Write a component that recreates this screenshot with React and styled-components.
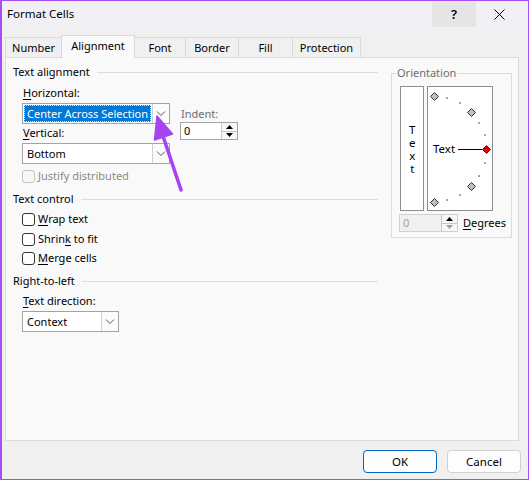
import React from "react";
import styled, { createGlobalStyle } from "styled-components";

const FONT = `"Noto Sans", "Open Sans", sans-serif`;

const GlobalStyle = createGlobalStyle`
  html, body { margin: 0; padding: 0; background: #ffffff; }
  * { box-sizing: border-box; }
`;

const Window = styled.div`
  position: relative;
  width: 529px;
  height: 480px;
  border: 1px solid #a64ef6;
  border-left-width: 2px;
  background: #f0f0f0;
  display: flex;
  flex-direction: column;
  color: #000;
  font-family: ${FONT};
  font-size: 11px;
  overflow: hidden;
`;

const TitleBar = styled.div`
  height: 26px;
  display: flex;
  align-items: center;
  background: #f1f1f5;
`;

const Title = styled.div`
  flex: 1;
  padding-left: 5px;
  padding-bottom: 2px;
  font-size: 11.5px;
`;

const CaptionButton = styled.div`
  width: ${(p) => p.$w}px;
  height: 26px;
  display: flex;
  align-items: center;
  justify-content: center;
  background: ${(p) => (p.$hover ? "#e5e5e5" : "transparent")};
  margin-right: ${(p) => p.$mr || 0}px;
  font-size: 13px;
  font-weight: 600;
`;

const TabStrip = styled.div`
  display: flex;
  align-items: flex-end;
  height: 22px;
  margin-top: 8px;
  padding-left: 3px;
  position: relative;
  z-index: 1;
`;

const Tab = styled.div`
  width: ${(p) => p.$w}px;
  height: ${(p) => (p.$active ? 23 : 20)}px;
  margin-bottom: ${(p) => (p.$active ? -1 : 0)}px;
  margin-left: -1px;
  &:first-child { margin-left: 0; }
  border: 1px solid #d9d9d9;
  border-bottom: none;
  background: ${(p) => (p.$active ? "#f9f9f9" : "#f0f0f0")};
  position: relative;
  z-index: ${(p) => (p.$active ? 2 : 1)};
  display: flex;
  align-items: center;
  justify-content: center;
  padding-bottom: ${(p) => (p.$active ? 3 : 0)}px;
`;

const Panel = styled.div`
  margin: 0 9px 0 3px;
  height: 384px;
  background: #f9f9f9;
  border: 1px solid #dcdcdc;
  display: flex;
  gap: 13px;
  padding: 6px 6px 0 7px;
`;

const LeftColumn = styled.div`
  flex: 0 0 365px;
  display: flex;
  flex-direction: column;
`;

const GroupHeading = styled.div`
  display: flex;
  align-items: center;
  height: 16px;
  line-height: 15px;
  padding-bottom: 1px;
  margin-top: ${(p) => p.$mt || 0}px;
  &::after {
    content: "";
    flex: 1;
    border-top: 1px solid #dcdcdc;
    margin-left: 7px;
    margin-top: 1px;
  }
`;

const Indented = styled.div`
  margin-left: 9px;
  display: flex;
  flex-direction: column;
`;

const Label = styled.div`
  height: 16px;
  line-height: 15px;
  padding-left: 1px;
  margin-top: ${(p) => p.$mt || 0}px;
  color: ${(p) => (p.$disabled ? "#6d6d6d" : "#000")};
  white-space: nowrap;
`;

const Key = styled.span`
  text-decoration: underline;
  text-underline-offset: 2px;
`;

const FieldRow = styled.div`
  display: flex;
  margin-top: 2px;
`;

const FieldColumn = styled.div`
  display: flex;
  flex-direction: column;
  margin-left: ${(p) => p.$ml || 0}px;
  padding-top: ${(p) => p.$pt || 0}px;
`;

const Select = styled.div`
  display: flex;
  width: ${(p) => p.$w}px;
  height: 21px;
  border: 1px solid #a3a3a3;
  background: #fff;
  margin-top: ${(p) => p.$mt || 0}px;
`;

const SelectValue = styled.div`
  flex: 1;
  display: flex;
  padding: 1px;
  min-width: 0;
`;

const SelectText = styled.div`
  flex: 1;
  display: flex;
  align-items: center;
  padding-left: 3px;
  padding-bottom: 1px;
  white-space: nowrap;
  overflow: hidden;
  background: ${(p) => (p.$selected ? "#0078d7" : "transparent")};
  color: ${(p) => (p.$selected ? "#fff" : "#000")};
  outline: ${(p) => (p.$selected ? "1px dotted rgba(255,255,255,0.85)" : "none")};
  outline-offset: -1px;
`;

const DropButton = styled.div`
  width: 17px;
  border-left: 1px solid #cfcfcf;
  background: #fbfbfb;
  display: flex;
  align-items: center;
  justify-content: center;
`;

const Spin = styled.div`
  display: flex;
  width: ${(p) => p.$w}px;
  height: 18px;
  border: 1px solid ${(p) => (p.$disabled ? "#d0d0d0" : "#a3a3a3")};
  background: ${(p) => (p.$disabled ? "#f0f0f0" : "#fff")};
  margin-left: ${(p) => p.$ml || 0}px;
`;

const SpinValue = styled.div`
  flex: 1;
  padding-left: 3px;
  line-height: 15px;
  color: ${(p) => (p.$disabled ? "#a0a0a0" : "#000")};
`;

const SpinButtons = styled.div`
  width: 16px;
  display: flex;
  flex-direction: column;
  border-left: 1px solid #c8c8c8;
  background: #f7f7f7;
`;

const SpinHalf = styled.div`
  flex: 1;
  display: flex;
  align-items: center;
  justify-content: center;
  & + & { border-top: 1px solid #c8c8c8; }
`;

const CheckRow = styled.div`
  display: flex;
  align-items: center;
  height: 16px;
  gap: 3px;
  margin-top: ${(p) => p.$mt || 0}px;
  color: ${(p) => (p.$disabled ? "#8a8a8a" : "#000")};
`;

const CheckLabel = styled.span`
  line-height: 15px;
  padding-bottom: 1px;
`;

const CheckBox = styled.div`
  width: 13px;
  height: 13px;
  border: 1px solid ${(p) => (p.$disabled ? "#c4c4c4" : "#333")};
  border-radius: 3px;
  background: ${(p) => (p.$disabled ? "#f7f7f7" : "#fff")};
`;

const Orientation = styled.fieldset`
  flex: 0 0 121px;
  margin: 1px 0 0 0;
  padding: 0 0 3px 8px;
  border: 1px solid #dcdcdc;
  height: 173px;
  min-width: 0;
`;

const Legend = styled.legend`
  padding: 0 1px;
  margin-left: -4px;
  line-height: 15px;
  padding-bottom: 1px;
  color: #6d6d6d;
`;

const OrientBoxes = styled.div`
  display: flex;
  gap: 3px;
  margin-top: 5px;
`;

const VerticalBox = styled.div`
  width: 24px;
  height: 125px;
  border: 1px solid #8e8e8e;
  background: #fff;
  display: flex;
  align-items: center;
  justify-content: center;
  padding-bottom: 2px;
`;

const VerticalText = styled.span`
  writing-mode: vertical-lr;
  text-orientation: upright;
  letter-spacing: -2px;
  line-height: 1;
  font-size: 11.5px;
`;

const DialBox = styled.div`
  width: 66px;
  height: 125px;
  border: 1px solid #8e8e8e;
  background: #fff;
`;

const DegreesRow = styled.div`
  display: flex;
  align-items: center;
  margin-top: 3px;
  margin-left: -1px;
  gap: 5px;
`;

const Footer = styled.div`
  display: flex;
  justify-content: flex-end;
  gap: 10px;
  padding-right: 7px;
  margin-top: 9px;
`;

const Button = styled.div`
  width: 74px;
  height: 23px;
  border: 1px solid ${(p) => (p.$primary ? "#0067c0" : "#d0d0d0")};
  border-radius: 4px;
  background: #fdfdfd;
  display: flex;
  align-items: center;
  justify-content: center;
  font-size: 11.5px;
  padding-bottom: 1px;
`;

const Overlay = styled.svg`
  position: absolute;
  left: -2px;
  top: -1px;
  pointer-events: none;
`;

const Chevron = () => (
  <svg width="10" height="6" viewBox="0 0 10 6">
    <path d="M1 0.5 L5 4.5 L9 0.5" fill="none" stroke="#5a5a5a" strokeWidth="1" />
  </svg>
);

const Tri = ({ up, color = "#000" }) => (
  <svg width="7" height="4" viewBox="0 0 7 4">
    <path d={up ? "M0 4 L3.5 0 L7 4 Z" : "M0 0 L3.5 4 L7 0 Z"} fill={color} />
  </svg>
);

const SpinControl = ({ w, ml, disabled }) => (
  <Spin $w={w} $ml={ml} $disabled={disabled}>
    <SpinValue $disabled={disabled}>0</SpinValue>
    <SpinButtons>
      <SpinHalf><Tri up color="#000" /></SpinHalf>
      <SpinHalf><Tri color={disabled ? "#a0a0a0" : "#000"} /></SpinHalf>
    </SpinButtons>
  </Spin>
);

const Dropdown = ({ w, mt, value, selected }) => (
  <Select $w={w} $mt={mt}>
    <SelectValue>
      <SelectText $selected={selected}>{value}</SelectText>
    </SelectValue>
    <DropButton><Chevron /></DropButton>
  </Select>
);

const Diamond = ({ x, y, red }) => (
  <path
    d={`M${x} ${y - 4} L${x + 4} ${y} L${x} ${y + 4} L${x - 4} ${y} Z`}
    fill={red ? "#e00000" : "#c0c0c0"}
    stroke={red ? "#900000" : "#333333"}
    strokeWidth="1"
  />
);

const Dial = () => {
  const cx = 5.5, cy = 62, r = 53;
  const pt = (deg) => [cx + r * Math.cos((deg * Math.PI) / 180), cy - r * Math.sin((deg * Math.PI) / 180)];
  const dots = [75, 60, 30, 15, -15, -30, -60, -75];
  const diamonds = [90, 45, -45, -90];
  return (
    <svg width="64" height="123" viewBox="0 0 64 123">
      {dots.map((d) => {
        const [x, y] = pt(d);
        return <rect key={d} x={Math.round(x) - 1} y={Math.round(y) - 1} width="2" height="2" fill="#a8a8a8" />;
      })}
      {diamonds.map((d) => {
        const [x, y] = pt(d);
        return <Diamond key={d} x={Math.round(x) + 0.5} y={Math.round(y) + 0.5} />;
      })}
      <text x="5" y="61.5" dominantBaseline="central" fontFamily={FONT} fontSize="11.5" fill="#000">Text</text>
      <line x1="30" y1="62.5" x2="54" y2="62.5" stroke="#000" strokeWidth="1" />
      <Diamond x={58.5} y={62.5} red />
    </svg>
  );
};

const tabs = [
  { label: "Number", w: 57 },
  { label: "Alignment", w: 74, active: true },
  { label: "Font", w: 52 },
  { label: "Border", w: 54 },
  { label: "Fill", w: 55 },
  { label: "Protection", w: 69 },
];

export default function App() {
  return (
    <>
      <GlobalStyle />
      <Window>
        <TitleBar>
          <Title>Format Cells</Title>
          <CaptionButton $w={44} $hover>?</CaptionButton>
          <CaptionButton $w={46} $mr={6}>
            <svg width="11" height="11" viewBox="0 0 11 11">
              <path d="M0.5 0.5 L10.5 10.5 M10.5 0.5 L0.5 10.5" stroke="#000" strokeWidth="1" />
            </svg>
          </CaptionButton>
        </TitleBar>

        <TabStrip>
          {tabs.map((t) => (
            <Tab key={t.label} $w={t.w} $active={t.active}>{t.label}</Tab>
          ))}
        </TabStrip>

        <Panel>
          <LeftColumn>
            <GroupHeading>Text alignment</GroupHeading>
            <Indented>
              <Label $mt={5}><Key>H</Key>orizontal:</Label>
              <FieldRow>
                <FieldColumn>
                  <Dropdown w={148} value="Center Across Selection" selected />
                  <Label $mt={1}><Key>V</Key>ertical:</Label>
                  <Dropdown w={148} mt={2} value="Bottom" />
                </FieldColumn>
                <FieldColumn $ml={10} $pt={3}>
                  <Label $disabled>Indent:</Label>
                  <SpinControl w={58} ml={0} />
                </FieldColumn>
              </FieldRow>
              <CheckRow $mt={4} $disabled>
                <CheckBox $disabled />
                <CheckLabel>Justify distributed</CheckLabel>
              </CheckRow>
            </Indented>

            <GroupHeading $mt={7}>Text control</GroupHeading>
            <Indented>
              <CheckRow $mt={4}>
                <CheckBox />
                <CheckLabel><Key>W</Key>rap text</CheckLabel>
              </CheckRow>
              <CheckRow $mt={4}>
                <CheckBox />
                <CheckLabel>Shrin<Key>k</Key> to fit</CheckLabel>
              </CheckRow>
              <CheckRow $mt={3}>
                <CheckBox />
                <CheckLabel><Key>M</Key>erge cells</CheckLabel>
              </CheckRow>
            </Indented>

            <GroupHeading $mt={7}>Right-to-left</GroupHeading>
            <Indented>
              <Label $mt={4}><Key>T</Key>ext direction:</Label>
              <Dropdown w={97} mt={2} value="Context" />
            </Indented>
          </LeftColumn>

          <Orientation>
            <Legend>Orientation</Legend>
            <OrientBoxes>
              <VerticalBox>
                <VerticalText>Text</VerticalText>
              </VerticalBox>
              <DialBox>
                <Dial />
              </DialBox>
            </OrientBoxes>
            <DegreesRow>
              <SpinControl w={59} disabled />
              <CheckLabel><Key>D</Key>egrees</CheckLabel>
            </DegreesRow>
          </Orientation>
        </Panel>

        <Footer>
          <Button $primary>OK</Button>
          <Button>Cancel</Button>
        </Footer>

        <Overlay width="529" height="480" viewBox="0 0 529 480">
          <line x1="181" y1="190" x2="162" y2="133" stroke="#a445f2" strokeWidth="3.5" strokeLinecap="round" />
          <path d="M157 116 L172.5 134 L154.5 140 Z" fill="#a445f2" stroke="#a445f2" strokeWidth="1.5" strokeLinejoin="round" />
        </Overlay>
      </Window>
    </>
  );
}
